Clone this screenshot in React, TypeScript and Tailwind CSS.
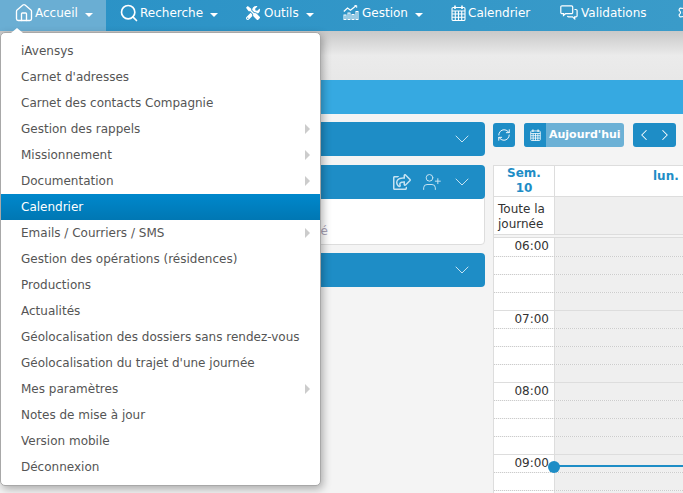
import type { ReactNode } from "react";
import { House, Search, RefreshCw, ChevronDown, ChevronLeft, ChevronRight, UserPlus, Settings } from "lucide-react";
import { FaTools, FaRegShareSquare } from "react-icons/fa";

const font = "font-['DejaVu_Sans',sans-serif]";

function Caret() {
  return <span className="ml-[7px] mt-[4px] w-0 h-0 border-x-[4px] border-x-transparent border-t-[4px] border-t-white" />;
}

function CalIcon({ size = 15 }: { size?: number }) {
  return (
    <svg width={size} height={size + 1} viewBox="0 0 15 16" fill="none" stroke="currentColor" strokeWidth="1.1" className="shrink-0">
      <rect x="1" y="2.5" width="13" height="13" rx="1.2" />
      <path d="M1 6h13M1 9h13M1 12.2h13M4.3 6v9.5M7.5 6v9.5M10.7 6v9.5" />
      <path d="M4 .5v3.5M11 .5v3.5" strokeWidth="1.6" />
    </svg>
  );
}

function ChartIcon() {
  return (
    <svg width="16" height="15" viewBox="0 0 16 15" fill="none" stroke="currentColor" strokeWidth="1" className="shrink-0">
      <path d="M.8 6.5 4.5 3l3 2.2L13 .8" strokeWidth="1.3" />
      <path d="M11.5.6h2.2v2.2" />
      <rect x="1" y="10" width="2" height="4.5" />
      <rect x="5" y="8" width="2" height="6.5" />
      <rect x="9" y="9.5" width="2" height="5" />
      <rect x="13" y="6.5" width="2" height="8" />
    </svg>
  );
}

function BubblesIcon() {
  return (
    <svg width="18" height="15" viewBox="0 0 18 15" fill="none" stroke="currentColor" strokeWidth="1.2" className="shrink-0">
      <path d="M2 .8h9.5a1.2 1.2 0 0 1 1.2 1.2v5.5a1.2 1.2 0 0 1-1.2 1.2H5.5L3.5 10.5V8.7H2A1.2 1.2 0 0 1 .8 7.5V2A1.2 1.2 0 0 1 2 .8Z" />
      <path d="M14.5 4.5h1.4a1.2 1.2 0 0 1 1.2 1.2v5a1.2 1.2 0 0 1-1.2 1.2h-1.2v2l-2.2-2H8.5a1.2 1.2 0 0 1-1-1" />
    </svg>
  );
}

function NavItem({ icon, iconW, label, caret, active, w }: { icon: ReactNode; iconW: string; label: string; caret?: boolean; active?: boolean; w: string }) {
  return (
    <div className={`flex items-center h-[31px] pb-[6px] shrink-0 text-[12px] text-white ${w} ${active ? "bg-[#6aaed3]" : ""}`}>
      <span className={`flex items-center justify-center shrink-0 ${iconW}`}>{icon}</span>
      <span className="ml-[3px]">{label}</span>
      {caret && <Caret />}
    </div>
  );
}

const items: [string, boolean?][] = [
  ["iAvensys"],
  ["Carnet d'adresses"],
  ["Carnet des contacts Compagnie"],
  ["Gestion des rappels", true],
  ["Missionnement", true],
  ["Documentation", true],
  ["Calendrier"],
  ["Emails / Courriers / SMS", true],
  ["Gestion des opérations (résidences)"],
  ["Productions"],
  ["Actualités"],
  ["Géolocalisation des dossiers sans rendez-vous"],
  ["Géolocalisation du trajet d'une journée"],
  ["Mes paramètres", true],
  ["Notes de mise à jour"],
  ["Version mobile"],
  ["Déconnexion"],
];

function Menu() {
  return (
    <div className="absolute left-0 top-[32px] w-[321px] h-[454px] bg-white border border-[#a8a8a8] rounded-[5px] shadow-[2px_3px_8px_rgba(0,0,0,0.3)] py-[5px] z-10 text-[12px] text-[#555]">
      <div className="absolute -top-[5px] left-[10px] w-0 h-0 border-x-[6px] border-x-transparent border-b-[5px] border-b-white" />
      {items.map(([t, sub]) => {
        const on = t === "Calendrier";
        return (
          <div key={t} className={`relative h-[26px] leading-[26px] pl-[20px] ${on ? "bg-gradient-to-b from-[#0088cc] to-[#0077b3] text-white" : ""}`}>
            {t}
            {sub && <span className="absolute right-[10px] top-[8px] w-0 h-0 border-y-[5px] border-y-transparent border-l-[5px] border-l-[#ccc]" />}
          </div>
        );
      })}
    </div>
  );
}

function PanelHead({ children }: { children?: ReactNode }) {
  return (
    <div className="h-[34px] bg-[#1e8dc6] rounded-[4px] flex items-center justify-end pr-[11px] gap-[8px] text-[#c5e3f2]">
      {children}
      <ChevronDown size={24} strokeWidth={1} />
    </div>
  );
}

function HourBlock({ label, first }: { label: string; first?: boolean }) {
  return (
    <div className="flex flex-col border-b border-[#ddd]">
      {[0, 1, 2, 3].map((i) => (
        <div key={i} className={`flex ${first && i === 0 ? "h-[19px]" : i === 3 ? "h-[17px]" : "h-[18px]"} ${i < 3 ? "border-b border-dotted border-[#ccc]" : ""}`}>
          <div className="w-[60px] shrink-0 bg-white text-right pr-[5px] text-[12px] leading-[17px] text-[#333]">{i === 0 ? label : ""}</div>
          <div className="w-px bg-[#ddd] shrink-0" />
          <div className="flex-1 bg-[#efefef]" />
        </div>
      ))}
    </div>
  );
}

export default function App() {
  return (
    <div className={`relative w-[683px] h-[493px] overflow-hidden bg-[#f4f4f4] ${font}`}>
      <div className="h-[31px] flex bg-gradient-to-r from-[#2891c6] to-[#3a9bc9]">
        <NavItem w="w-[106px] pl-[15px]" iconW="w-[17px]" active caret label="Accueil" icon={<House size={20} strokeWidth={1.6} className="shrink-0" />} />
        <NavItem w="w-[115px] pl-[15px]" iconW="w-[16px]" caret label="Recherche" icon={<Search size={20} strokeWidth={2} className="shrink-0" />} />
        <NavItem w="w-[121px] pl-[24px]" iconW="w-[16px]" caret label="Outils" icon={<FaTools size={14} className="shrink-0" />} />
        <NavItem w="w-[109px] pl-[1px]" iconW="w-[16px]" caret label="Gestion" icon={<ChartIcon />} />
        <NavItem w="w-[108px]" iconW="w-[14px]" label="Calendrier" icon={<CalIcon />} />
        <NavItem w="w-[118px]" iconW="w-[19px]" label="Validations" icon={<BubblesIcon />} />
        <NavItem w="w-[30px]" iconW="w-[16px]" label="" icon={<Settings size={17} strokeWidth={1.6} className="shrink-0" />} />
      </div>
      <div className="h-[49px] bg-gradient-to-b from-[#c8c8c8] via-[#ebebeb] via-50% to-[#e8e8e8]" />
      <div className="h-[34px] bg-[#36a9e1]" />
      <div className="flex pt-[8px] pl-[8px]">
        <div className="w-[477px] shrink-0">
          <PanelHead />
          <div className="mt-[9px] bg-white border border-[#ddd] rounded-[4px] h-[80px]">
            <div className="-m-px">
              <PanelHead>
                <FaRegShareSquare size={18} className="mr-[3px]" />
                <UserPlus size={20} strokeWidth={1.2} />
              </PanelHead>
            </div>
            <div className="text-right pr-[156px] mt-[24px] text-[12px] text-[#a9a3b8]">é</div>
          </div>
          <div className="mt-[8px]"><PanelHead /></div>
        </div>
        <div className="ml-[8px] flex-1 min-w-0">
          <div className="h-[24px] mt-[1px] flex items-center text-white">
            <div className="w-[22px] h-[24px] rounded-[3px] bg-[#1e8dc6] flex items-center justify-center"><RefreshCw size={14} strokeWidth={1.6} /></div>
            <div className="ml-[9px] h-[24px] w-[100px] rounded-[3px] bg-[#6cb1d6] overflow-hidden flex items-center text-[11px] font-bold">
              <div className="w-[22px] h-[24px] bg-[#1e8dc6] flex items-center justify-center"><CalIcon size={11} /></div>
              <span className="ml-[3px] whitespace-nowrap">Aujourd'hui</span>
            </div>
            <div className="ml-[9px] h-[24px] w-[43px] rounded-[3px] bg-[#1e8dc6] flex items-center justify-between px-[2px]">
              <ChevronLeft size={18} strokeWidth={1.4} />
              <ChevronRight size={18} strokeWidth={1.4} />
            </div>
          </div>
          <div className="relative mt-[18px] border-l border-[#ddd] border-t h-[400px] overflow-hidden">
            <div className="flex h-[31px] border-b border-[#ddd] bg-white">
              <div className="w-[60px] shrink-0 text-center text-[12px] leading-[15px] font-bold text-[#1e8dc6]">Sem.<br />10</div>
              <div className="w-px shrink-0 bg-[#ddd]" />
              <div className="flex-1 pl-[98px] pt-[1px] text-[12px] font-bold text-[#1e8dc6] whitespace-nowrap">lun. <span className="text-[#e8a080]">0</span></div>
            </div>
            <div className="flex h-[38px] border-b border-[#ddd]">
              <div className="w-[60px] shrink-0 bg-white pl-[4px] pt-[5px] text-[12px] leading-[15px] text-[#333]">Toute la journée</div>
              <div className="w-px shrink-0 bg-[#ddd]" />
              <div className="flex-1 bg-[#efefef]" />
            </div>
            <div className="h-[3px] bg-[#f4f4f4] border-b border-[#ddd]" />
            <HourBlock label="06:00" first />
            <HourBlock label="07:00" />
            <HourBlock label="08:00" />
            <HourBlock label="09:00" />
            <div className="absolute left-[60px] right-0 top-[299px] h-[2px] bg-[#1e8dc6]" />
            <div className="absolute left-[54px] top-[295px] w-[12px] h-[12px] rounded-full bg-[#1e8dc6]" />
          </div>
        </div>
      </div>
      <Menu />
    </div>
  );
}
